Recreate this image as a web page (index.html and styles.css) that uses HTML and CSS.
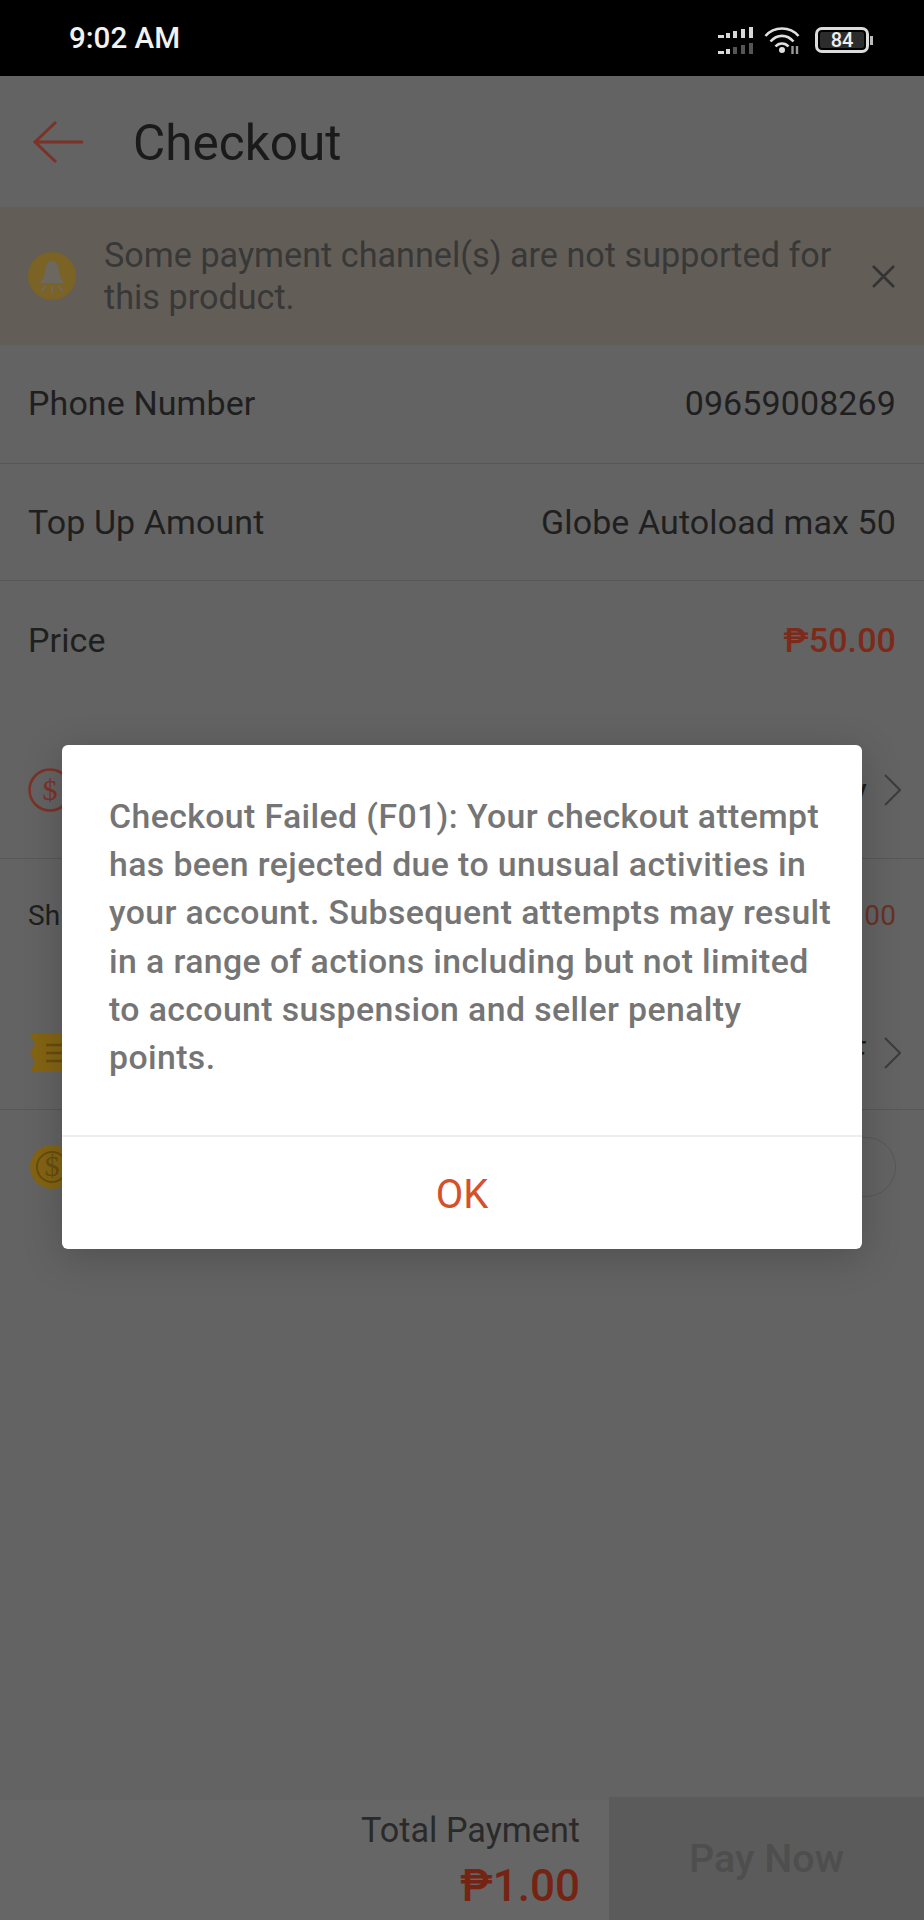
FILE: index.html
```html
<!DOCTYPE html>
<html lang="en">
<head>
    <meta charset="UTF-8">
    <meta name="viewport" content="width=device-width, initial-scale=1.0">
    <title>Checkout</title>
    <link rel="stylesheet" href="styles.css">
</head>
<body>
    <div class="screen">
        <div class="status-bar">
            <div class="status-time">9:02 AM</div>
            <div class="status-icons">
                <svg class="signal" width="36" height="27" viewBox="0 0 36 27">
                    <g fill="#d8d8d8">
                        <rect x="0" y="8" width="6" height="3"/><rect x="8" y="6" width="4" height="5"/><rect x="15" y="4" width="4" height="7"/><rect x="23" y="2" width="4" height="9"/><rect x="31" y="0" width="4" height="11"/>
                        <rect x="0" y="24" width="6" height="3"/><rect x="8" y="22" width="4" height="5"/>
                    </g>
                    <g fill="#555">
                        <rect x="15" y="20" width="4" height="7"/><rect x="23" y="18" width="4" height="9"/><rect x="31" y="16" width="4" height="11"/>
                    </g>
                </svg>
                <svg class="wifi" width="37" height="28" viewBox="0 0 37 28">
                    <g fill="none" stroke="#e0e0e0" stroke-width="2.6">
                        <path d="M1.5 10 C10 0 26 0 34.5 10"/>
                        <path d="M6.5 15.5 C13 8 23 8 29.5 15.5"/>
                        <path d="M11.5 20.5 C15 16.5 21 16.5 24.5 20.5"/>
                    </g>
                    <circle cx="18" cy="24" r="3" fill="#e0e0e0"/>
                    <path d="M28.5 20 V28 M33 20 V28" stroke="#999" stroke-width="2.4"/>
                </svg>
                <div class="battery">
                    <div class="battery-body">84</div>
                    <div class="battery-cap"></div>
                </div>
            </div>
        </div>

        <div class="page">
            <div class="header">
                <svg class="back-icon" width="52" height="44" viewBox="0 0 52 44">
                    <path d="M24 2 L3 22 L24 42 M3 22 H51" fill="none" stroke="#7c3226" stroke-width="3"/>
                </svg>
                <div class="header-title">Checkout</div>
            </div>

            <div class="notice">
                <svg class="notice-icon" width="48" height="48" viewBox="0 0 48 48">
                    <circle cx="24" cy="24" r="24" fill="#7a6324"/>
                    <path d="M24 9 C19 9 18 13 17 19 C16 25 14 28 12 31 H36 C34 28 32 25 31 19 C30 13 29 9 24 9 Z" fill="#6c6860"/>
                    <path d="M24 34 V41 M18 34 L13 39 M30 34 L35 39" stroke="#6c6860" stroke-width="2"/>
                </svg>
                <div class="notice-text">Some payment channel(s) are not supported for this product.</div>
                <svg class="notice-close" width="25" height="25" viewBox="0 0 25 25">
                    <path d="M2 2 L23 23 M23 2 L2 23" stroke="#333" stroke-width="2.6"/>
                </svg>
            </div>

            <div class="section">
                <div class="row row-first row-line">
                    <span>Phone Number</span>
                    <span>09659008269</span>
                </div>
                <div class="row row-line">
                    <span>Top Up Amount</span>
                    <span>Globe Autoload max 50</span>
                </div>
                <div class="row">
                    <span>Price</span>
                    <span class="price">₱50.00</span>
                </div>
            </div>

            <div class="section">
                <div class="row row-tall row-line">
                    <svg class="row-icon" width="44" height="44" viewBox="0 0 44 44">
                        <circle cx="22" cy="22" r="20.5" fill="none" stroke="#7c3226" stroke-width="2.5"/>
                        <text x="22" y="32" text-anchor="middle" class="dollar dollar-red">$</text>
                    </svg>
                    <span class="row-push">y</span>
                    <svg class="chevron" width="17" height="32" viewBox="0 0 17 32">
                        <path d="M1 1 L16 16 L1 31" fill="none" stroke="#3c3c3c" stroke-width="2"/>
                    </svg>
                </div>
                <div class="row row-small">
                    <span>Sh</span>
                    <span class="small-value">00</span>
                </div>
            </div>

            <div class="section section-last">
                <div class="row row-voucher row-line">
                    <svg class="row-icon ticket-icon" width="44" height="38" viewBox="0 0 44 38">
                        <path d="M0 0 H44 V38 H0 L5 28 L0 19 L5 10 Z" fill="#846413"/>
                        <path d="M16 11 H36 M16 19 H36 M16 27 H36" stroke="#664d10" stroke-width="2.5"/>
                    </svg>
                    <span class="row-push">F</span>
                    <svg class="chevron" width="17" height="32" viewBox="0 0 17 32">
                        <path d="M1 1 L16 16 L1 31" fill="none" stroke="#3c3c3c" stroke-width="2"/>
                    </svg>
                </div>
                <div class="row row-coins">
                    <svg class="row-icon coin-icon" width="44" height="44" viewBox="0 0 44 44">
                        <circle cx="22" cy="22" r="22" fill="#846413"/>
                        <circle cx="22" cy="22" r="15" fill="none" stroke="#664d10" stroke-width="2"/>
                        <text x="22" y="31" text-anchor="middle" class="dollar dollar-gold">$</text>
                    </svg>
                    <div class="toggle row-push"></div>
                </div>
            </div>

            <div class="spacer"></div>

            <div class="footer">
                <div class="total">
                    <div class="total-label">Total Payment</div>
                    <div class="total-value">₱1.00</div>
                </div>
                <div class="pay-button">Pay Now</div>
            </div>

            <div class="overlay">
                <div class="dialog">
                    <div class="dialog-text">Checkout Failed (F01): Your checkout attempt has been rejected due to unusual activities in your account. Subsequent attempts may result in a range of actions including but not limited to account suspension and seller penalty points.</div>
                    <div class="dialog-button">OK</div>
                </div>
            </div>
        </div>
    </div>
</body>
</html>
```

FILE: styles.css
```css
* {
    box-sizing: border-box;
}
body {
    margin: 0;
    font-family: 'Roboto', sans-serif;
    background-color: #636363;
}
.screen {
    width: 924px;
    height: 1920px;
    display: flex;
    flex-direction: column;
}
.status-bar {
    height: 76px;
    background-color: #000;
    color: #f2f2f2;
    display: flex;
    justify-content: space-between;
    align-items: center;
    padding: 0 51px 0 69px;
}
.status-time {
    font-size: 29.6px;
    font-weight: 500;
}
.status-icons {
    display: flex;
    align-items: center;
    gap: 14px;
    margin-top: 4px;
}
.signal {
    margin-right: -4px;
}
.battery {
    display: flex;
    align-items: center;
    gap: 1px;
}
.battery-body {
    width: 54px;
    height: 26px;
    border: 3px solid #dcdcdc;
    border-radius: 7px;
    background-color: #2c2c2c;
    box-shadow: inset 0 0 0 2px #000;
    color: #eee;
    font-size: 20px;
    font-weight: 500;
    line-height: 20px;
    text-align: center;
}
.battery-cap {
    width: 3px;
    height: 9px;
    background-color: #bbb;
}

/* page under the dialog, colours already dimmed */
.page {
    flex: 1;
    position: relative;
    display: flex;
    flex-direction: column;
    background-color: #636363;
}
.header {
    height: 131px;
    display: flex;
    align-items: center;
    padding-left: 32px;
}
.header-title {
    margin-left: 49px;
    padding-top: 2px;
    font-size: 49.5px;
    color: #1a1a1a;
}
.notice {
    height: 138px;
    display: flex;
    align-items: center;
    padding: 0 28px;
    background-color: #625e57;
}
.notice-text {
    width: 760px;
    margin-left: 28px;
    font-size: 34.2px;
    line-height: 42px;
    color: #383838;
}
.notice-close {
    margin-left: auto;
}
.section {
    margin-bottom: 24px;
}
.section-last {
    margin-bottom: 0;
}
.row {
    height: 117px;
    display: flex;
    justify-content: space-between;
    align-items: center;
    padding: 0 28px;
    font-size: 34px;
    letter-spacing: 0.1px;
    color: #1f1f1f;
}
.row-first {
    height: 119px;
    padding-bottom: 2px;
}
.row-line {
    border-bottom: 1px solid #575757;
}
.row-tall {
    height: 137px;
}
.row-small {
    height: 113px;
    font-size: 28px;
}
.row-voucher {
    height: 114px;
}
.row-coins {
    height: 114px;
}
.row-push {
    margin-left: auto;
}
.row-icon {
    flex-shrink: 0;
}
.ticket-icon,
.coin-icon {
    margin-left: 2px;
}
.price {
    color: #7c2a19;
    font-weight: 500;
}
.small-value {
    color: #663225;
}
.chevron {
    margin-left: 17px;
    margin-right: -5px;
}
.dollar {
    font-family: 'Liberation Serif', serif;
    font-size: 30px;
}
.dollar-red {
    fill: #7c3226;
}
.dollar-gold {
    fill: #664d10;
}
.toggle {
    width: 100px;
    height: 60px;
    border: 1px solid #575757;
    border-radius: 30px;
}
.spacer {
    flex: 1;
}
.footer {
    height: 120px;
    display: flex;
}
.total {
    width: 609px;
    padding: 10px 29px 0 0;
    background-color: #666;
    text-align: right;
}
.total-label {
    font-size: 34.2px;
    line-height: 40px;
    color: #2a2a2a;
}
.total-value {
    margin-top: 11px;
    font-size: 44px;
    font-weight: 500;
    line-height: 50px;
    color: #752413;
}
.pay-button {
    flex: 1;
    margin-top: -3px;
    display: flex;
    justify-content: center;
    align-items: center;
    background-color: #5b5b5b;
    color: #4e4e4e;
    font-size: 39.5px;
    font-weight: 500;
}
.overlay {
    position: absolute;
    top: 0;
    left: 0;
    width: 100%;
    height: 100%;
    padding-top: 669px;
    display: flex;
    justify-content: center;
    align-items: flex-start;
}
.dialog {
    width: 800px;
    background-color: #fff;
    border-radius: 6px;
    box-shadow: 0 8px 40px rgba(0, 0, 0, 0.2);
}
.dialog-text {
    height: 390px;
    padding: 48px 21px 0 47px;
    font-size: 33.8px;
    font-weight: 500;
    letter-spacing: 0.4px;
    line-height: 48.2px;
    color: #757575;
}
.dialog-button {
    height: 114px;
    padding-top: 3px;
    border-top: 2px solid #eee;
    display: flex;
    justify-content: center;
    align-items: center;
    font-size: 40px;
    color: #d4512c;
}
```
